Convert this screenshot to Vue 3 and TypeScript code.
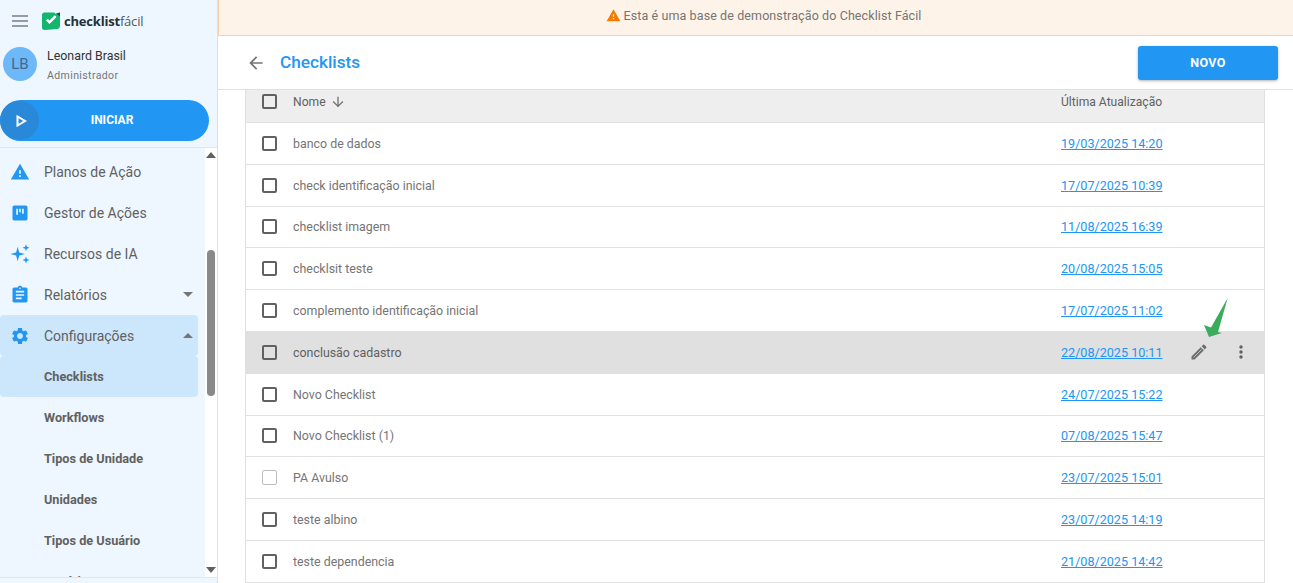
<script setup lang="ts">
interface Row {
  name: string
  date: string
  hover?: boolean
  disabled?: boolean
}

const rows: Row[] = [
  { name: 'banco de dados', date: '19/03/2025 14:20' },
  { name: 'check identificação inicial', date: '17/07/2025 10:39' },
  { name: 'checklist imagem', date: '11/08/2025 16:39' },
  { name: 'checklsit teste', date: '20/08/2025 15:05' },
  { name: 'complemento identificação inicial', date: '17/07/2025 11:02' },
  { name: 'conclusão cadastro', date: '22/08/2025 10:11', hover: true },
  { name: 'Novo Checklist', date: '24/07/2025 15:22' },
  { name: 'Novo Checklist (1)', date: '07/08/2025 15:47' },
  { name: 'PA Avulso', date: '23/07/2025 15:01', disabled: true },
  { name: 'teste albino', date: '23/07/2025 14:19' },
  { name: 'teste dependencia', date: '21/08/2025 14:42' },
]

const subItems = ['Workflows', 'Tipos de Unidade', 'Unidades', 'Tipos de Usuário', 'Usuários']
</script>

<template>
  <div class="app">
    <aside class="sidebar">
      <div class="brand">
        <svg class="burger" viewBox="0 0 16 12" width="16" height="12">
          <path d="M0 1h16M0 6h16M0 11h16" stroke="#424242" stroke-width="1.2" fill="none" />
        </svg>
        <svg class="logo" viewBox="0 0 18 18" width="18" height="18">
          <path d="M2.500 .5H12l2 1.500 4-1.500V14q0 2.500-2.500 3L3 18q-3 0-3-2.500V3q0-2.500 2.500-2.500z" fill="#14b56e" />
          <path d="M4 8.500l3.500 3.500L14.500 5l-1.800-1.700L7.500 8.500 5.700 6.800z" fill="#fff" />
          <path d="M14 1.500L18 .5V4.500z" fill="#17583f" />
        </svg>
        <span class="logo-text"><b>checklist</b>fácil</span>
      </div>

      <div class="user">
        <div class="avatar">LB</div>
        <div class="user-info">
          <div class="user-name">Leonard Brasil</div>
          <div class="user-role">Administrador</div>
        </div>
      </div>

      <button class="start">
        <span class="start-icon">
          <svg viewBox="0 0 12 12" width="12" height="12">
            <path d="M2.500 1.500v9L10 6z" fill="none" stroke="#fff" stroke-width="2" stroke-linejoin="miter" />
          </svg>
        </span>
        <span class="start-label">INICIAR</span>
      </button>

      <div class="menu-wrap">
        <nav class="menu">
          <div class="menu-item">
            <svg class="mi" viewBox="0 0 24 24"><path d="M1 21h22L12 2 1 21zm12-3h-2v-2h2v2zm0-4h-2v-4h2v4z" /></svg>
            Planos de Ação
          </div>
          <div class="menu-item">
            <svg class="mi" viewBox="0 0 24 24"><path d="M19 3H5c-1.100 0-2 .9-2 2v14c0 1.100.9 2 2 2h14c1.100 0 2-.9 2-2V5c0-1.100-.9-2-2-2zM9.500 14H7.500V7h2v7zm3.500-3h-2V7h2v4zm3.500 2h-2V7h2v6z" /></svg>
            Gestor de Ações
          </div>
          <div class="menu-item">
            <svg class="mi" viewBox="0 0 24 24"><path d="M9.200 3.300l1.900 6.800 6.800 1.900-6.800 1.900-1.900 6.800-1.900-6.800L.5 12l6.800-1.900zM19.200 .3l1.100 3.100 3.100 1.100-3.100 1.100-1.100 3.100-1.100-3.100L15 4.500l3.100-1.100zM19.200 15l1.100 3.100 3.100 1.100-3.100 1.100-1.100 3.100-1.100-3.100-3.100-1.100 3.100-1.100z" /></svg>
            Recursos de IA
          </div>
          <div class="menu-item">
            <svg class="mi" viewBox="0 0 24 24"><path d="M19 3h-4.180C14.400 1.840 13.300 1 12 1c-1.300 0-2.400.84-2.820 2H5c-1.100 0-2 .9-2 2v14c0 1.100.9 2 2 2h14c1.100 0 2-.9 2-2V5c0-1.100-.9-2-2-2zm-7 0c.55 0 1 .45 1 1s-.45 1-1 1-1-.45-1-1 .45-1 1-1zm2 14H7v-2h7v2zm3-4H7v-2h10v2zm0-4H7V7h10v2z" /></svg>
            Relatórios
            <span class="caret down"></span>
          </div>
          <div class="menu-item active">
            <svg class="mi" viewBox="0 0 24 24"><path d="M19.140 12.940c.04-.3.06-.61.06-.94 0-.32-.02-.64-.07-.94l2.030-1.580a.49.49 0 0 0 .12-.61l-1.920-3.320a.488.488 0 0 0-.59-.22l-2.390.96c-.5-.38-1.030-.7-1.620-.94l-.36-2.540a.484.484 0 0 0-.48-.41h-3.840c-.24 0-.43.17-.47.41l-.36 2.540c-.59.24-1.130.57-1.620.94l-2.390-.96c-.22-.08-.47 0-.59.22L2.740 8.870c-.12.21-.08.47.12.61l2.030 1.580c-.05.3-.09.63-.09.94s.02.64.07.94l-2.030 1.580a.49.49 0 0 0-.12.61l1.920 3.320c.12.22.37.29.59.22l2.390-.96c.5.38 1.030.7 1.620.94l.36 2.540c.05.24.24.41.48.41h3.840c.24 0 .44-.17.47-.41l.36-2.540c.59-.24 1.130-.56 1.620-.94l2.390.96c.22.08.47 0 .59-.22l1.920-3.320c.12-.22.07-.47-.12-.61l-2.010-1.580zM12 15.600c-1.980 0-3.600-1.620-3.600-3.600s1.620-3.600 3.600-3.600 3.600 1.620 3.600 3.600-1.620 3.600-3.600 3.600z" /></svg>
            Configurações
            <span class="caret up"></span>
          </div>
          <div class="menu-item sub active">Checklists</div>
          <div v-for="item in subItems" :key="item" class="menu-item sub">{{ item }}</div>
        </nav>
        <div class="scrollbar">
          <span class="sb-arrow up"></span>
          <div class="sb-track"><div class="sb-thumb"></div></div>
          <span class="sb-arrow down"></span>
        </div>
      </div>
    </aside>

    <main class="main">
      <div class="banner">
        <svg viewBox="0 0 24 24" width="15" height="15"><path d="M1 21h22L12 2 1 21zm12-3h-2v-2h2v2zm0-4h-2v-4h2v4z" fill="#f57c00" /></svg>
        <span>Esta é uma base de demonstração do Checklist Fácil</span>
      </div>

      <header class="page-head">
        <svg class="back" viewBox="0 0 24 24" width="20" height="20"><path d="M20 11H7.830l5.590-5.590L12 4l-8 8 8 8 1.410-1.410L7.830 13H20v-2z" fill="#757575" /></svg>
        <h1>Checklists</h1>
        <button class="novo">NOVO</button>
      </header>

      <div class="table">
        <div class="row head">
          <span class="check"></span>
          <span class="name">Nome
            <svg viewBox="0 0 24 24" width="16" height="16"><path d="M20 12l-1.410-1.410L13 16.170V4h-2v12.170l-5.580-5.590L4 12l8 8 8-8z" fill="#757575" /></svg>
          </span>
          <span class="date">Última Atualização</span>
        </div>
        <div v-for="row in rows" :key="row.name" class="row" :class="{ hover: row.hover }">
          <span class="check" :class="{ off: row.disabled }"></span>
          <span class="name">{{ row.name }}</span>
          <span class="date">
            <a>{{ row.date }}</a>
            <span v-if="row.hover" class="actions">
              <svg viewBox="0 0 24 24" width="20" height="20">
                <path d="M3 17.250V21h3.750L17.810 9.940l-3.750-3.750L3 17.250zM20.710 7.040c.39-.39.39-1.020 0-1.410l-2.340-2.340c-.39-.39-1.020-.39-1.410 0l-1.830 1.830 3.750 3.750 1.830-1.830z" fill="#6e6e6e" />
                <path d="M5.500 18.500L15 9" stroke="#e0e0e0" stroke-width=".9" />
              </svg>
              <svg viewBox="0 0 24 24" width="20" height="20"><path d="M12 8c1.100 0 2-.9 2-2s-.9-2-2-2-2 .9-2 2 .9 2 2 2zm0 2c-1.100 0-2 .9-2 2s.9 2 2 2 2-.9 2-2-.9-2-2-2zm0 6c-1.100 0-2 .9-2 2s.9 2 2 2 2-.9 2-2-.9-2-2-2z" fill="#616161" /></svg>
            </span>
          </span>
        </div>
        <svg class="pointer" viewBox="0 0 26 42" width="26" height="42">
          <path d="M24.700 1L15 35 18.700 36 6 40 1 28 8 30.500z" fill="#3bab5c" />
        </svg>
      </div>
    </main>
  </div>
</template>

<style>
html, body {
  margin: 0;
  background: #fff;
}
</style>

<style scoped>
.app {
  display: flex;
  width: 1293px;
  height: 583px;
  overflow: hidden;
  font-family: Roboto, "Liberation Sans", sans-serif;
  color: #616161;
}

.sidebar {
  width: 218px;
  flex: none;
  display: flex;
  flex-direction: column;
  background: #eef7ff;
  border-right: 1px solid #e0e0e0;
  padding-bottom: 5px;
  box-sizing: border-box;
  height: 583px;
}

.brand {
  display: flex;
  align-items: center;
  height: 41px;
  padding-left: 12px;
  flex: none;
}

.logo {
  margin-left: 14px;
}

.logo-text {
  margin-left: 4px;
  font-family: "Open Sans", sans-serif;
  font-size: 13px;
  color: #4f5b5f;
  letter-spacing: -0.2px;
}

.logo-text b {
  color: #263238;
  font-weight: 700;
}

.user {
  display: flex;
  height: 46px;
  padding-left: 3px;
  flex: none;
}

.avatar {
  width: 34px;
  height: 34px;
  margin-top: 6px;
  border-radius: 50%;
  background: #6db8f9;
  color: #42688c;
  font-size: 15px;
  display: flex;
  align-items: center;
  justify-content: center;
}

.user-info {
  margin-left: 10px;
}

.user-name {
  font-size: 12.4px;
  line-height: 16px;
  margin-top: 7px;
  color: #333;
}

.user-role {
  font-size: 10.5px;
  line-height: 14px;
  margin-top: 5px;
  color: #757575;
  letter-spacing: 0.4px;
}

.start {
  width: 209px;
  height: 41px;
  margin-top: 13px;
  padding: 0 0 2px;
  border: 0;
  border-radius: 21px;
  background: #2196f3;
  display: flex;
  align-items: center;
  color: #fff;
  flex: none;
  font-family: inherit;
}

.start-icon {
  width: 39px;
  height: 39px;
  margin-bottom: -2px;
  padding-left: 2px;
  box-sizing: border-box;
  border-radius: 50%;
  background: #2a88d8;
  display: flex;
  align-items: center;
  justify-content: center;
  flex: none;
}

.start-label {
  flex: 1;
  text-align: center;
  font-size: 12px;
  font-weight: 700;
  padding-right: 24px;
}

.menu-wrap {
  display: flex;
  flex: 1;
  min-height: 0;
  margin-top: 6px;
  border-top: 1px solid #dfe6ee;
  border-bottom: 1px solid #dfe6ee;
}

.menu {
  width: 205px;
  flex: none;
  overflow: hidden;
  padding-top: 3px;
  box-sizing: border-box;
}

.menu-item {
  height: 41px;
  width: 198px;
  display: flex;
  align-items: center;
  padding-left: 44px;
  box-sizing: border-box;
  position: relative;
  font-size: 14px;
  color: #616161;
}

.menu-item.active {
  background: #cce6fc;
  border-radius: 4px;
}

.menu-item.sub {
  font-size: 12.7px;
  font-weight: 700;
}

.mi {
  position: absolute;
  left: 10px;
  width: 20px;
  height: 20px;
  fill: #2196f3;
}

.caret {
  position: absolute;
  left: 183px;
  width: 0;
  height: 0;
  border-left: 5px solid transparent;
  border-right: 5px solid transparent;
}

.caret.down {
  border-top: 5px solid #757575;
}

.caret.up {
  border-bottom: 5px solid #757575;
}

.scrollbar {
  width: 12px;
  flex: none;
  background: #fff;
  display: flex;
  flex-direction: column;
  align-items: center;
}

.sb-arrow {
  width: 0;
  height: 0;
  border-left: 5px solid transparent;
  border-right: 5px solid transparent;
  flex: none;
}

.sb-arrow.up {
  border-bottom: 6px solid #616161;
  margin-top: 4px;
}

.sb-arrow.down {
  border-top: 6px solid #616161;
  margin-bottom: 4px;
}

.sb-track {
  flex: 1;
  width: 8px;
}

.sb-thumb {
  width: 8px;
  height: 146px;
  margin-top: 92px;
  border-radius: 4px;
  background: #8a8a8a;
}

.main {
  flex: 1;
  min-width: 0;
  display: flex;
  flex-direction: column;
}

.banner {
  height: 36px;
  flex: none;
  box-sizing: border-box;
  background: #fef3e8;
  border-bottom: 1px solid #fdd0a2;
  border-left: 1px solid #fdd0a2;
  display: flex;
  align-items: center;
  justify-content: center;
  gap: 2px;
  font-size: 12.5px;
  color: #757575;
  letter-spacing: 0.1px;
  padding-left: 16px;
  padding-bottom: 4px;
}

.page-head {
  height: 54px;
  flex: none;
  box-sizing: border-box;
  display: flex;
  align-items: center;
  padding: 0 15px 0 28px;
  border-bottom: 1px solid #e0e0e0;
}

.page-head h1 {
  margin: 0 0 2px 14px;
  font-size: 17.2px;
  font-weight: 500;
  color: #2196f3;
  flex: 1;
}

.novo {
  width: 140px;
  height: 34px;
  border: 0;
  border-radius: 3px;
  background: #2196f3;
  color: #fff;
  font-family: inherit;
  font-size: 12.5px;
  font-weight: 700;
  letter-spacing: 0.4px;
  box-shadow: 0 1px 3px rgba(0, 0, 0, 0.3);
}

.table {
  position: relative;
  width: 1020px;
  margin-left: 27px;
  box-sizing: border-box;
  border-left: 1px solid #e0e0e0;
  border-right: 1px solid #e0e0e0;
}

.row {
  display: flex;
  align-items: center;
  height: 41.8px;
  box-sizing: border-box;
  border-bottom: 1px solid #e0e0e0;
  padding-left: 16px;
  font-size: 12.4px;
  color: #757575;
}

.row.head {
  height: 33px;
  background: #eeeeee;
  color: #616161;
  font-size: 12.1px;
  align-items: flex-start;
  padding-top: 4px;
}

.row.hover {
  background: #e0e0e0;
  color: #616161;
}

.check {
  width: 15px;
  height: 15px;
  box-sizing: border-box;
  border: 2px solid #616161;
  border-radius: 2px;
  flex: none;
}

.check.off {
  border: 1px solid #bdbdbd;
}

.name {
  margin-left: 16px;
  flex: 1;
  display: flex;
  align-items: center;
  gap: 4px;
  height: 16px;
}

.date {
  width: 203px;
  flex: none;
  display: flex;
  align-items: center;
  height: 16px;
}

.date a {
  font-size: 12.6px;
  color: #2196f3;
  text-decoration: underline;
}

.actions {
  display: flex;
  gap: 22px;
  margin-left: 26px;
}

.pointer {
  position: absolute;
  left: 957px;
  top: 207px;
}
</style>
